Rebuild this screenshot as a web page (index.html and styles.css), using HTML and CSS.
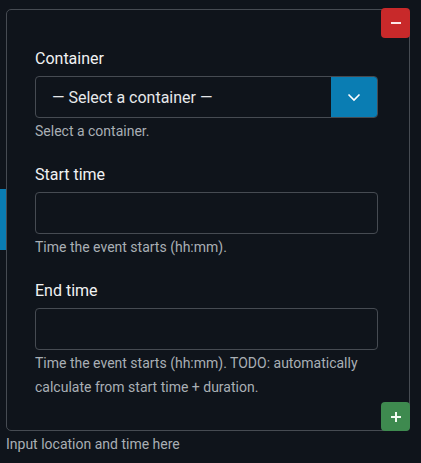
FILE: index.html
```html
<!DOCTYPE html>
<html lang="en">
<head>
<meta charset="utf-8">
<title>Location and time</title>
<link rel="stylesheet" href="styles.css">
</head>
<body>
<div class="side-tab"></div>
<div class="wrap">
  <div class="card">
    <button class="btn-remove" type="button" aria-label="Remove">
      <svg width="12" height="4" viewBox="0 0 12 4"><rect x="1" y="1" width="10" height="2" fill="#fde8e8"/></svg>
    </button>
    <div class="group">
      <label class="label">Container</label>
      <div class="select">
        <span class="select-text">— Select a container —</span>
        <span class="select-btn">
          <svg width="14" height="9" viewBox="0 0 14 9"><path d="M1.5 1.5 L7 7 L12.5 1.5" fill="none" stroke="#fff" stroke-width="1.6"/></svg>
        </span>
      </div>
      <div class="help">Select a container.</div>
    </div>
    <div class="group">
      <label class="label">Start time</label>
      <div class="input"></div>
      <div class="help">Time the event starts (hh:mm).</div>
    </div>
    <div class="group">
      <label class="label">End time</label>
      <div class="input"></div>
      <div class="help">Time the event starts (hh:mm). TODO: automatically calculate from start time + duration.</div>
    </div>
    <button class="btn-add" type="button" aria-label="Add">
      <svg width="12" height="12" viewBox="0 0 12 12"><path d="M6 1 V11 M1 6 H11" stroke="#f2fbf2" stroke-width="2"/></svg>
    </button>
  </div>
  <div class="caption">Input location and time here</div>
</div>
</body>
</html>
```
FILE: styles.css
```css
* { box-sizing: border-box; }
html, body {
  margin: 0;
  background: #0f141b;
  font-family: Roboto, "Noto Sans", sans-serif;
}
.side-tab {
  position: absolute;
  left: 0;
  top: 189px;
  width: 6px;
  height: 61px;
  background: #0a7db3;
}
.wrap {
  padding: 9px 11px 0 6px;
}
.card {
  position: relative;
  width: 404px;
  border: 1px solid #464b52;
  border-radius: 5px;
  padding: 39px 31px 9px 28px;
}
.btn-remove {
  position: absolute;
  top: -2px;
  right: -1px;
  width: 29px;
  height: 30px;
  border: 0;
  border-radius: 4px;
  background: #c8292a;
  display: flex;
  align-items: center;
  justify-content: center;
  padding: 0;
}
.btn-add {
  position: absolute;
  bottom: -1px;
  right: -1px;
  width: 29px;
  height: 29px;
  border: 0;
  border-radius: 4px;
  background: #3e8a4f;
  display: flex;
  align-items: center;
  justify-content: center;
  padding: 0;
}
.group {
  margin-bottom: 22px;
}
.label {
  display: block;
  color: #f1f2f3;
  font-size: 16px;
  line-height: 19px;
  margin-bottom: 8px;
}
.select {
  display: flex;
  height: 42px;
  border: 1px solid #464b52;
  border-radius: 4px;
  overflow: hidden;
}
.select-text {
  flex: 1;
  display: flex;
  align-items: center;
  padding-left: 16px;
  color: #e6e8ea;
  font-size: 16px;
}
.select-btn {
  width: 46px;
  background: #0a7db3;
  display: flex;
  align-items: center;
  justify-content: center;
}
.input {
  height: 42px;
  border: 1px solid #464b52;
  border-radius: 4px;
}
.help {
  margin-top: 1px;
  color: #a9afb5;
  font-size: 14px;
  line-height: 24px;
}
.caption {
  margin-top: 1px;
  color: #a9afb5;
  font-size: 14px;
  line-height: 24px;
}
```
